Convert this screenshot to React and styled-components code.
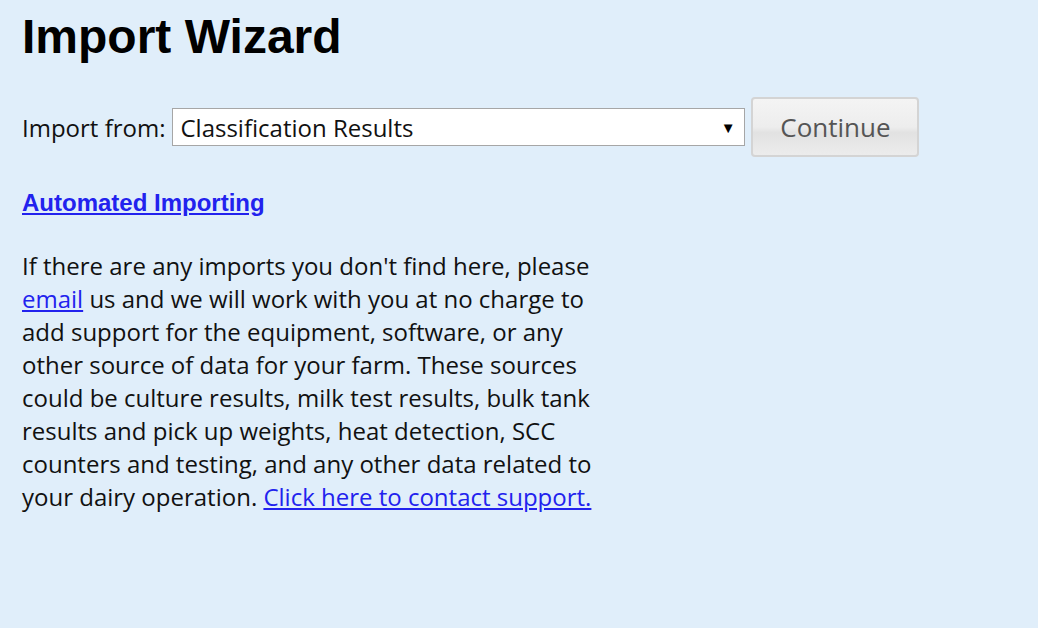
import React from 'react';
import styled, { createGlobalStyle } from 'styled-components';

const Global = createGlobalStyle`
  html, body {
    margin: 0;
    padding: 0;
    background: #e0eefa;
  }
  body {
    font-family: 'Open Sans', sans-serif;
    color: #111;
  }
`;

const Page = styled.div`
  padding: 4px 22px 0;
  min-height: 628px;
  box-sizing: border-box;
`;

const Title = styled.h1`
  font-family: 'Liberation Sans', Arial, sans-serif;
  font-size: 48px;
  font-weight: bold;
  margin: 0;
  line-height: 66px;
  color: #000;
`;

const ImportRow = styled.div`
  display: flex;
  align-items: center;
  margin-top: 27px;
  font-size: 24px;
`;

const Label = styled.span`
  margin-right: 7px;
`;

const SelectBox = styled.div`
  position: relative;
  width: 573px;
  height: 38px;
  box-sizing: border-box;
  border: 1px solid #a6a6a6;
  background: #fff;
  display: flex;
  align-items: center;
  padding-left: 7px;
  font-size: 24px;
`;

const Arrow = styled.span`
  position: absolute;
  right: 9px;
  top: 50%;
  transform: translateY(-50%);
  font-size: 15px;
  color: #000;
`;

const Button = styled.button`
  margin-left: 6px;
  width: 168px;
  height: 60px;
  border: 2px solid #d4d4d4;
  border-radius: 4px;
  background: linear-gradient(#f4f4f4 0%, #ededed 50%, #e2e2e2 60%, #ececec 100%);
  font-family: 'Open Sans', sans-serif;
  font-size: 26px;
  color: #555;
  cursor: pointer;
`;

const HeadLink = styled.a`
  display: inline-block;
  margin-top: 32px;
  font-family: 'Liberation Sans', Arial, sans-serif;
  font-weight: bold;
  font-size: 24px;
  color: #2222ee;
  text-decoration: underline;
`;

const Paragraph = styled.p`
  width: 600px;
  margin: 32px 0 0;
  font-size: 24px;
  line-height: 33px;
  color: #111;
`;

const Link = styled.a`
  color: #2222ee;
  text-decoration: underline;
`;

export default function App() {
  return (
    <>
      <Global />
      <Page>
        <Title>Import Wizard</Title>
        <ImportRow>
          <Label>Import from:</Label>
          <SelectBox>
            Classification Results
            <Arrow>▼</Arrow>
          </SelectBox>
          <Button>Continue</Button>
        </ImportRow>
        <HeadLink href="#">Automated Importing</HeadLink>
        <Paragraph>
          If there are any imports you don't find here, please{' '}
          <Link href="#">email</Link> us and we will work with you at no charge to
          add support for the equipment, software, or any other source of data for
          your farm. These sources could be culture results, milk test results, bulk
          tank results and pick up weights, heat detection, SCC counters and testing,
          and any other data related to your dairy operation.{' '}
          <Link href="#">Click here to contact support.</Link>
        </Paragraph>
      </Page>
    </>
  );
}
